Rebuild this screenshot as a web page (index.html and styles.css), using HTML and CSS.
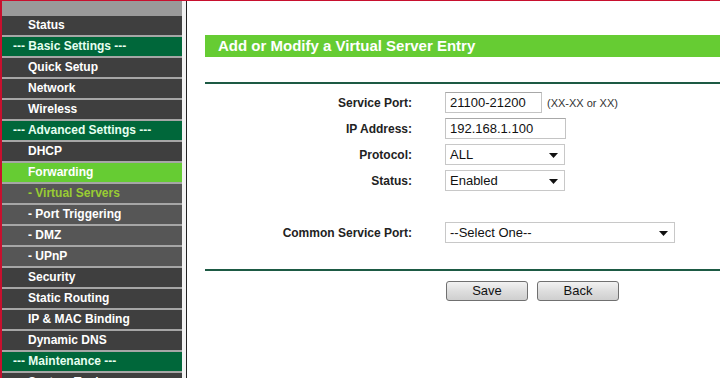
FILE: index.html
```html
<!DOCTYPE html>
<html>
<head>
<meta charset="utf-8">
<link rel="stylesheet" href="styles.css">
</head>
<body>
<div class="frame">
  <nav class="sidebar">
    <div class="side-top"></div>
    <div class="item">Status</div>
    <div class="group">--- Basic Settings ---</div>
    <div class="item">Quick Setup</div>
    <div class="item">Network</div>
    <div class="item">Wireless</div>
    <div class="group">--- Advanced Settings ---</div>
    <div class="item">DHCP</div>
    <div class="item active">Forwarding</div>
    <div class="item sub current">- Virtual Servers</div>
    <div class="item sub">- Port Triggering</div>
    <div class="item sub">- DMZ</div>
    <div class="item sub">- UPnP</div>
    <div class="item">Security</div>
    <div class="item">Static Routing</div>
    <div class="item">IP &amp; MAC Binding</div>
    <div class="item">Dynamic DNS</div>
    <div class="group">--- Maintenance ---</div>
    <div class="item">System Tools</div>
  </nav>
  <div class="gutter"></div>
  <main class="content">
    <h1 class="title">Add or Modify a Virtual Server Entry</h1>
    <hr class="rule rule-top">
    <div class="form">
      <label class="lbl">Service Port:</label>
      <div class="field"><input class="text w96" value="21100-21200"><span class="hint">(XX-XX or XX)</span></div>
      <label class="lbl">IP Address:</label>
      <div class="field"><input class="text w120" value="192.168.1.100"></div>
      <label class="lbl">Protocol:</label>
      <div class="field"><span class="sel w119"><span>ALL</span><svg width="9" height="5" viewBox="0 0 9 5"><path d="M0 0H9L4.5 5Z" fill="#111"/></svg></span></div>
      <label class="lbl">Status:</label>
      <div class="field"><span class="sel w119"><span>Enabled</span><svg width="9" height="5" viewBox="0 0 9 5"><path d="M0 0H9L4.5 5Z" fill="#111"/></svg></span></div>
      <label class="lbl lbl-gap">Common Service Port:</label>
      <div class="field lbl-gap"><span class="sel w229"><span>--Select One--</span><svg width="9" height="5" viewBox="0 0 9 5"><path d="M0 0H9L4.5 5Z" fill="#111"/></svg></span></div>
    </div>
    <hr class="rule rule-bottom">
    <div class="buttons">
      <button class="btn">Save</button>
      <button class="btn">Back</button>
    </div>
  </main>
</div>
</body>
</html>
```

FILE: styles.css
```css
html, body {
  margin: 0;
  padding: 0;
  background: #fff;
  height: 100%;
  overflow: hidden;
}
body {
  font-family: "Liberation Sans", Arial, sans-serif;
}
.frame {
  display: flex;
  height: 378px;
  border-top: 1px solid #c8102e;
  border-left: 2px solid #c8102e;
  box-sizing: border-box;
}
.sidebar {
  width: 180px;
  flex: none;
  background: #a0a0a0;
  overflow: hidden;
}
.side-top {
  height: 15px;
  background: #9a9a9a;
}
.item, .group {
  height: 19px;
  line-height: 19px;
  border-bottom: 2px solid #a6a6a6;
  font-size: 12px;
  font-weight: bold;
  color: #fff;
  white-space: nowrap;
  background: #3f3f3f;
  padding-left: 26px;
}
.group {
  background: #00673a;
  color: #e6fff0;
  padding-left: 11px;
}
.item.active {
  background: #66cc33;
}
.item.sub {
  background: #565656;
}
.item.current {
  color: #99cc33;
}
.gutter {
  width: 4px;
  flex: none;
  background: #f2f2f2;
}
.content {
  flex: 1;
  border-left: 1px solid #222;
  padding-left: 18px;
  padding-top: 34px;
  min-width: 0;
}
.title {
  margin: 0;
  height: 22px;
  line-height: 22px;
  background: #66cc33;
  color: #fff;
  font-size: 15px;
  font-weight: bold;
  padding-left: 13px;
  white-space: nowrap;
}
.rule {
  border: 0;
  height: 2px;
  background: #1d5a44;
  margin: 0;
}
.rule-top {
  margin-top: 25px;
}
.form {
  display: grid;
  grid-template-columns: 207px auto;
  column-gap: 33px;
  row-gap: 5px;
  margin-top: 8px;
  align-items: center;
}
.lbl {
  text-align: right;
  font-size: 12px;
  font-weight: bold;
  color: #222;
}
.lbl-gap {
  margin-top: 26px;
}
.field {
  display: flex;
  align-items: center;
  height: 21px;
}
.text {
  height: 21px;
  box-sizing: border-box;
  border: 1px solid #c4c4c4;
  border-top-color: #a8a8a8;
  font-family: "Liberation Sans", Arial, sans-serif;
  font-size: 13px;
  color: #111;
  padding: 0 4px;
  margin: 0;
}
.w96 { width: 97px; }
.w120 { width: 121px; }
.w119 { width: 120px; }
.w229 { width: 230px; }
.hint {
  font-size: 11px;
  color: #333;
  margin-left: 5px;
}
.sel {
  height: 21px;
  box-sizing: border-box;
  border: 1px solid #c8c8c8;
  display: flex;
  align-items: center;
  justify-content: space-between;
  padding: 0 6px 0 4px;
  font-size: 13px;
  color: #111;
  background: #fff;
}
.sel svg {
  flex: none;
  margin-top: 1px;
}
.rule-bottom {
  margin-top: 26px;
}
.buttons {
  display: flex;
  gap: 9px;
  padding-left: 241px;
  margin-top: 10px;
}
.btn {
  width: 82px;
  height: 20px;
  border: 1px solid #707070;
  border-radius: 3px;
  background: linear-gradient(#f2f2f2, #dedede 50%, #cfcfcf);
  font-family: "Liberation Sans", Arial, sans-serif;
  font-size: 13px;
  color: #111;
  padding: 0;
  line-height: 18px;
}
```
